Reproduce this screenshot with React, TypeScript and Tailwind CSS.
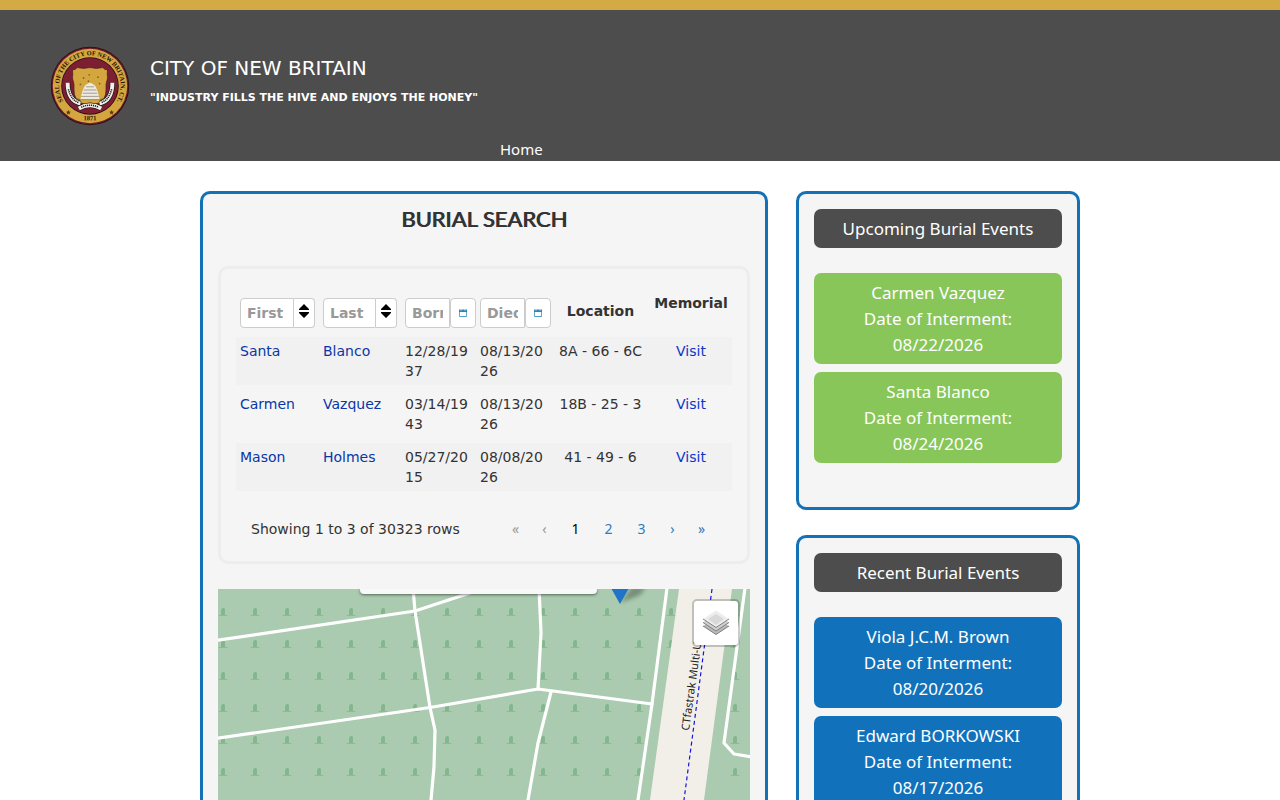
import type { ReactNode } from 'react';

interface Burial {
  first: string;
  last: string;
  born: string;
  died: string;
  location: string;
}

interface BurialEvent {
  name: string;
  date: string;
}

const BURIALS: Burial[] = [
  { first: 'Santa', last: 'Blanco', born: '12/28/1937', died: '08/13/2026', location: '8A - 66 - 6C' },
  { first: 'Carmen', last: 'Vazquez', born: '03/14/1943', died: '08/13/2026', location: '18B - 25 - 3' },
  { first: 'Mason', last: 'Holmes', born: '05/27/2015', died: '08/08/2026', location: '41 - 49 - 6' },
];

const UPCOMING: BurialEvent[] = [
  { name: 'Carmen Vazquez', date: '08/22/2026' },
  { name: 'Santa Blanco', date: '08/24/2026' },
];

const RECENT: BurialEvent[] = [
  { name: 'Viola J.C.M. Brown', date: '08/20/2026' },
  { name: 'Edward BORKOWSKI', date: '08/17/2026' },
];

function CitySeal() {
  return (
    <svg viewBox="0 0 100 100" className="size-20 shrink-0" role="img" aria-label="City seal">
      <defs>
        <path id="seal-top" d="M 18.4 72.100 A 38.5 38.5 0 1 1 81.6 72.100" />
        <path id="seal-bottom" d="M 30 92 Q 50 94 70 92" />
      </defs>
      <circle cx="50" cy="50" r="49" fill="#2b0a10" />
      <circle cx="50" cy="50" r="48" fill="#6d1a2c" />
      <circle cx="50" cy="50" r="46.5" fill="#d3a63f" />
      <circle cx="50" cy="50" r="36" fill="#2b0a10" />
      <circle cx="50" cy="50" r="35" fill="#7c1f33" />
      <text fontFamily="Liberation Serif, serif" fontWeight="700" fontSize="8" fill="#1d1408">
        <textPath href="#seal-top" startOffset="50%" textAnchor="middle">
          SEAL OF THE CITY OF NEW BRITAIN, CT.
        </textPath>
      </text>
      <text fontFamily="Liberation Serif, serif" fontWeight="700" fontSize="8" fill="#1d1408">
        <textPath href="#seal-bottom" startOffset="50%" textAnchor="middle">
          1871
        </textPath>
      </text>
      <path d="M23 80l1 2 2 .3-1.500 1.400.4 2-1.900-1-1.900 1 .4-2-1.500-1.400 2-.3zM77 80l1 2 2 .3-1.500 1.400.4 2-1.900-1-1.900 1 .4-2-1.500-1.400 2-.3z" fill="#5a3c10" />
      {/* shield */}
      <path
        d="M28 30q4 0 6-3 8 2 16 0 8 2 16 0 2 3 6 3-1 6 0 10-3 8-2 15 0 12-9 16l-11 5-11-5q-9-4-9-16 1-7-2-15 1-4 0-10z"
        fill="#d3a63f"
        stroke="#4a1018"
        strokeWidth="0.8"
      />
      <g fill="#7d6a1c">
        <circle cx="42" cy="40" r="1.1" />
        <circle cx="49" cy="36" r="1.1" />
        <circle cx="60" cy="39" r="1.1" />
        <circle cx="48" cy="44" r="1.1" />
        <circle cx="38" cy="48" r="1.1" />
        <circle cx="62" cy="47" r="1.1" />
      </g>
      {/* hive */}
      <path d="M50 46q7 2 9 9 2 6 3 12H38q1-6 3-12 2-7 9-9z" fill="#eeeae0" />
      <path d="M45 51h10M42 55h16M41 59h18M39 63h22M38 67h24" stroke="#777063" strokeWidth="0.8" />
      <path d="M30 67q9-4 8 5-5 1-8-5zM70 67q-9-4-8 5 5 1 8-5z" fill="#6b6f2a" />
      {/* ribbon */}
      <path d="M22 46q0 22 16 26M78 46q0 22-16 26" fill="none" stroke="#111" strokeWidth="6.500" />
      <path d="M22 46q0 22 16 26M78 46q0 22-16 26" fill="none" stroke="#f3f0ea" strokeWidth="5" />
      <path d="M23 54q3 13 13 17M77 54q-3 13-13 17" fill="none" stroke="#222" strokeWidth="2" strokeDasharray="1.500 1" />
      <path d="M36 78q14-8 28 0" fill="none" stroke="#111" strokeWidth="6.500" />
      <path d="M36 78q14-8 28 0" fill="none" stroke="#f3f0ea" strokeWidth="5" />
      <path d="M39 76.500q11-5 22 0" fill="none" stroke="#222" strokeWidth="2" strokeDasharray="1.500 1" />
    </svg>
  );
}

function SortIcon() {
  return (
    <svg viewBox="0 0 10 14" className="h-3.5 w-2.5" aria-hidden="true">
      <path d="M5 0l5 5v1H0V5zM5 14l5-5V8H0v1z" fill="#000" />
    </svg>
  );
}

function CalendarIcon() {
  return (
    <svg viewBox="0 0 8 8" className="size-2" aria-hidden="true">
      <path d="M0 .5h8V3H0z" fill="#2a86b8" />
      <path d="M.4 1v6.500h7.200V1" fill="none" stroke="#2a86b8" strokeWidth="0.8" />
      <path d="M1.500 .5h1v1h-1zM5.500 .5h1v1h-1z" fill="#fff" />
    </svg>
  );
}

function HeaderField({ label, action, icon, wide }: { label: string; action: string; icon: ReactNode; wide?: boolean }) {
  return (
    <div className="flex h-[30px]">
      <input
        type="text"
        placeholder={label}
        aria-label={label}
        className="w-0 min-w-0 flex-1 rounded-l border border-[#ccc] bg-white px-1.5 font-bold placeholder:text-[#999] focus:outline-none"
      />
      <button
        type="button"
        aria-label={action}
        className={`flex shrink-0 justify-center border border-[#ccc] bg-white ${
          wide ? 'w-[26px] items-center rounded' : 'w-[21px] rounded-r border-l-0 pt-[5px]'
        }`}
      >
        {icon}
      </button>
    </div>
  );
}

function BurialTable() {
  return (
    <table className="w-full table-fixed border-separate border-spacing-x-0 border-spacing-y-[5px] text-left text-sm text-[#333]">
      <colgroup>
        <col className="w-[83px]" />
        <col className="w-[82px]" />
        <col className="w-[75px]" />
        <col className="w-[75px]" />
        <col />
        <col className="w-[82px]" />
      </colgroup>
      <thead>
        <tr className="align-top">
          <th className="px-1 pt-[9px] pb-1">
            <HeaderField label="First" action="Sort by first name" icon={<SortIcon />} />
          </th>
          <th className="px-1 pt-[9px] pb-1">
            <HeaderField label="Last" action="Sort by last name" icon={<SortIcon />} />
          </th>
          <th className="pt-[9px] pb-1 pl-1">
            <HeaderField label="Born" action="Pick birth date" icon={<CalendarIcon />} wide />
          </th>
          <th className="pt-[9px] pb-1 pl-1">
            <HeaderField label="Died" action="Pick death date" icon={<CalendarIcon />} wide />
          </th>
          <th className="pt-3 text-center">Location</th>
          <th className="pt-1 text-center">Memorial</th>
        </tr>
      </thead>
      <tbody>
        {BURIALS.map((b) => (
          <tr key={b.last} className="align-top odd:bg-[#f1f1f1]">
            <td className="p-1">
              <a href="#" className="text-[#0a36a8]">{b.first}</a>
            </td>
            <td className="p-1">
              <a href="#" className="text-[#0a36a8]">{b.last}</a>
            </td>
            <td className="p-1 break-all">{b.born}</td>
            <td className="p-1 break-all">{b.died}</td>
            <td className="py-1 text-center">{b.location}</td>
            <td className="py-1 text-center">
              <a href="#" className="text-[#0a36c8]">Visit</a>
            </td>
          </tr>
        ))}
      </tbody>
    </table>
  );
}

function Pagination() {
  return (
    <div className="flex h-[34px] items-center justify-between pr-4 pl-[15px] text-sm text-[#333]">
      <span>Showing 1 to 3 of 30323 rows</span>
      <nav aria-label="Pages" className="flex font-['Noto_Sans',sans-serif] text-[#337ab7]">
        <button type="button" disabled className="w-[29px] text-[#999]">«</button>
        <button type="button" disabled className="w-[29px] text-[#999]">‹</button>
        <button type="button" aria-current="page" className="w-[33px] text-black">1</button>
        <button type="button" className="w-[33px]">2</button>
        <button type="button" className="w-[33px]">3</button>
        <button type="button" className="w-[29px]">›</button>
        <button type="button" className="w-[29px]">»</button>
      </nav>
    </div>
  );
}

function CemeteryMap() {
  return (
    <div className="relative h-[400px] overflow-hidden bg-[#aacbaf]">
      <svg viewBox="0 0 532 400" preserveAspectRatio="xMidYMin slice" className="size-full" role="img" aria-label="Cemetery map">
        <defs>
          <pattern id="graves" width="32" height="32" x="-11" y="0" patternUnits="userSpaceOnUse">
            <path d="M11.500 26h9v.8h-9zM14 26v-4.500q.5-2.800 2.300-2.800t1.700 2.800V26z" fill="#83b68b" />
          </pattern>
          <filter id="soft">
            <feGaussianBlur stdDeviation="2" />
          </filter>
        </defs>
        <rect width="532" height="400" fill="#aacbaf" />
        <rect width="532" height="400" fill="url(#graves)" />
        <path d="M461 0H514L486 211 461 400H407L432 211z" fill="#f2efe9" />
        <g fill="none" stroke="#fff" strokeWidth="3.200" strokeLinejoin="round" strokeLinecap="round">
          <path d="M-2 51.500L197 22 252 4 266 -1" />
          <path d="M195 -1L197 22 212 118.500 217 141 216 178 213 211 200 400" />
          <path d="M-2 149.500L212 118.500 320 100 434 115" />
          <path d="M321 -1L323 44 320 100" />
          <path d="M333 103L320 154 310 211 275 400" />
          <path d="M449 -1L434 115 420 211 396 400" />
          <path d="M527 -1L506 154 516 165 534 168" />
        </g>
        <path d="M494 0L466 211 441 400" fill="none" stroke="#1414e0" strokeWidth="1.200" strokeDasharray="4 3" />
        <text
          transform="translate(471 142) rotate(-82)"
          fontFamily="Noto Sans, sans-serif"
          fontSize="11"
          fill="#222"
        >
          CTfastrak Multi-Use Trail
        </text>
        <path d="M402 14L414 -2 428 -2 422 6z" fill="#000" opacity="0.3" filter="url(#soft)" />
        <path d="M393 -1H411L402 15z" fill="#1f74c8" />
      </svg>
      <div className="absolute top-0 left-[142px] h-[5px] w-[237px] rounded-b bg-[#f8f8f8] shadow-[0_1px_3px_rgba(0,0,0,0.5)]" />
      <button
        type="button"
        aria-label="Layers"
        className="absolute top-2.5 right-2.5 flex size-12 items-center justify-center rounded-[5px] border-2 border-black/20 bg-white bg-clip-padding"
      >
        <svg viewBox="0 0 26 26" className="size-[26px]" aria-hidden="true">
          <path d="M0 16l13 8.500L26 16l-3-2-10 6.500L3 14z" fill="#b9b9b9" />
          <path d="M0 16l13 8.500L26 16" fill="none" stroke="#808080" strokeWidth="1" />
          <path d="M0 12.500L13 21l13-8.500-3-2L13 17 3 10.500z" fill="#cfcfcf" />
          <path d="M0 12.500L13 21l13-8.500" fill="none" stroke="#808080" strokeWidth="1" />
          <path d="M0 9l13-8.500L26 9l-13 8.500z" fill="#ededed" />
          <path d="M5 9l8-5 8 5-8 6z" fill="#d9d9d9" />
          <path d="M0 9l13 8.500L26 9" fill="none" stroke="#808080" strokeWidth="1" />
        </svg>
      </button>
    </div>
  );
}

function EventPanel({ title, events, tone }: { title: string; events: BurialEvent[]; tone: 'green' | 'blue' }) {
  return (
    <section className="rounded-[10px] border-[3px] border-[#1272b5] bg-[#f5f5f5] px-[15px] pt-[15px] pb-11 text-center font-['Noto_Sans',sans-serif] text-[17px] leading-[26px] text-white">
      <h3 className="mb-[25px] rounded-[7px] bg-[#4d4d4d] pt-[7px] pb-1.5">{title}</h3>
      <ul className="flex flex-col gap-2">
        {events.map((e) => (
          <li
            key={e.name}
            className={`rounded-[7px] pt-[7px] pb-1.5 ${tone === 'green' ? 'bg-[#88c65a]' : 'bg-[#1172bb]'}`}
          >
            {e.name}
            <br />
            Date of Interment:
            <br />
            {e.date}
          </li>
        ))}
      </ul>
    </section>
  );
}

export default function App() {
  return (
    <div className="min-h-screen bg-white font-['DejaVu_Sans',sans-serif]">
      <header className="border-t-[10px] border-[#d4aa44] bg-[#4d4d4d] px-[50px] pt-9 text-white">
        <div className="flex gap-5">
          <CitySeal />
          <div className="pt-[7px]">
            <h1 className="text-xl leading-[30px]">CITY OF NEW BRITAIN</h1>
            <p className="text-[11px] leading-[30px] font-bold">"INDUSTRY FILLS THE HIVE AND ENJOYS THE HONEY"</p>
          </div>
        </div>
        <nav className="pt-[11px] pl-[450px]">
          <a href="#" className="block w-fit font-['Noto_Sans',sans-serif] text-[15px] leading-6">
            Home
          </a>
        </nav>
      </header>

      <main className="mx-auto grid max-w-[880px] grid-cols-[2fr_1fr] items-start gap-7 pt-[30px]">
        <section className="min-w-0 rounded-[10px] border-[3px] border-[#1272b5] bg-[#f5f5f5] px-[15px] pt-3 pb-[15px]">
          <h2 className="mb-[34px] text-center font-[Lato,sans-serif] text-[22px] leading-[26px] font-normal text-[#333] text-shadow-[1px_0_0_#333]">
            BURIAL SEARCH
          </h2>
          <div className="mb-[25px] rounded-[10px] border-[3px] border-[#ededed] p-[15px]">
            <BurialTable />
            <div className="pt-4">
              <Pagination />
            </div>
          </div>
          <CemeteryMap />
        </section>

        <aside className="flex flex-col gap-[25px]">
          <EventPanel title="Upcoming Burial Events" events={UPCOMING} tone="green" />
          <EventPanel title="Recent Burial Events" events={RECENT} tone="blue" />
        </aside>
      </main>
    </div>
  );
}
